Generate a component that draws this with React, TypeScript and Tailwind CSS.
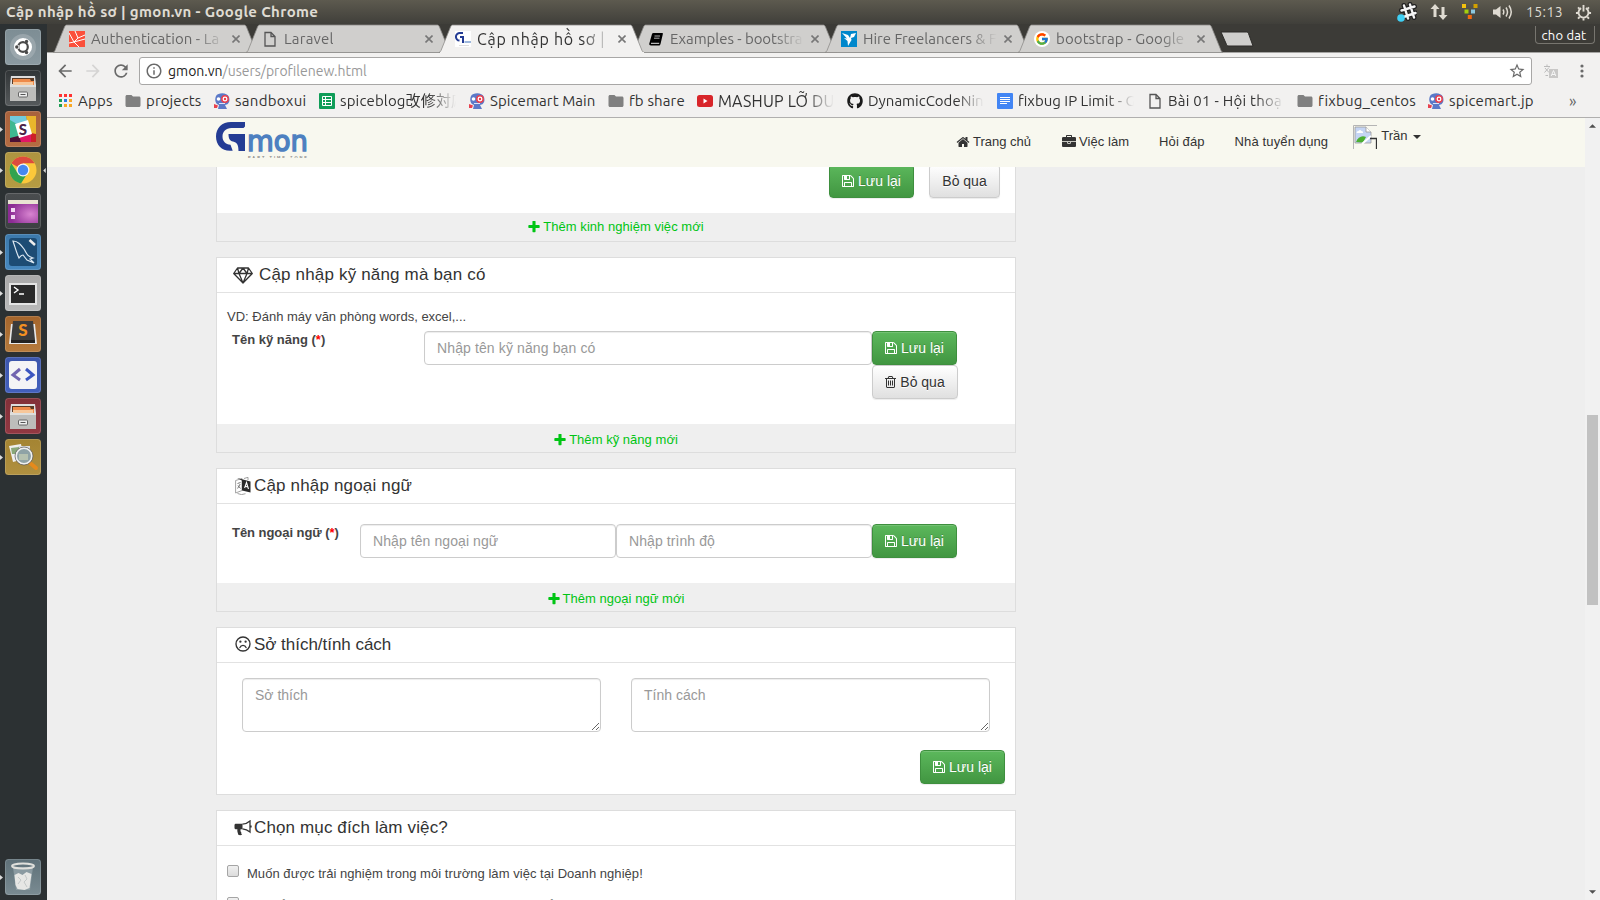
import React from 'react';
import type { ReactNode } from 'react';
import { FaGithub } from 'react-icons/fa';
import { FcGoogle } from 'react-icons/fc';
import { MdOutlineStarBorder, MdRefresh, MdArrowBack, MdArrowForward, MdFolder, MdOutlineInfo } from 'react-icons/md';

const UI = "font-['Ubuntu','Noto_Sans','Noto_Sans_CJK_JP',sans-serif]";

/* ---------- glyph icons ---------- */

function Glyph({ d, className, box = '0 0 1792 1792' }: { d: string; className: string; box?: string }) {
  return (
    <svg viewBox={box} className={className} fill="currentColor">
      <path d={d} />
    </svg>
  );
}

const PLUS =
  'M1600 736v192q0 40-28 68t-68 28h-416v416q0 40-28 68t-68 28h-192q-40 0-68-28t-28-68v-416h-416q-40 0-68-28t-28-68v-192q0-40 28-68t68-28h416v-416q0-40 28-68t68-28h192q40 0 68 28t28 68v416h416q40 0 68 28t28 68z';
const HOME =
  'M1472 992v480q0 26-19 45t-45 19h-384v-384h-256v384h-384q-26 0-45-19t-19-45v-480q0-1 .5-3t.5-3l575-474 575 474q1 2 1 6zm223-69l-62 74q-8 9-21 11h-3q-13 0-21-7l-692-577-692 577q-12 8-24 7-13-2-21-11l-62-74q-8-10-7-23.5t11-21.5l719-599q32-26 76-26t76 26l244 204v-195q0-14 9-23t23-9h192q14 0 23 9t9 23v408l219 182q10 8 11 21.500t-7 23.500z';
const SAVE =
  'M512 1536h768v-384h-768v384zm896 0h128v-896q0-14-10-38.500t-20-34.500l-281-281q-10-10-34-20t-39-10v416q0 40-28 68t-68 28h-576q-40 0-68-28t-28-68v-416h-128v1280h128v-416q0-40 28-68t68-28h832q40 0 68 28t28 68v416zm-384-928v-320q0-13-9.500-22.500t-22.500-9.500h-192q-13 0-22.500 9.500t-9.500 22.500v320q0 13 9.500 22.500t22.500 9.500h192q13 0 22.500-9.500t9.500-22.500zm640 32v928q0 40-28 68t-68 28h-1344q-40 0-68-28t-28-68v-1344q0-40 28-68t68-28h928q40 0 88 20t76 48l280 280q28 28 48 76t20 88z';
const TRASH =
  'M704 736v576q0 14-9 23t-23 9h-64q-14 0-23-9t-9-23v-576q0-14 9-23t23-9h64q14 0 23 9t9 23zm256 0v576q0 14-9 23t-23 9h-64q-14 0-23-9t-9-23v-576q0-14 9-23t23-9h64q14 0 23 9t9 23zm256 0v576q0 14-9 23t-23 9h-64q-14 0-23-9t-9-23v-576q0-14 9-23t23-9h64q14 0 23 9t9 23zm128 724v-948h-896v948q0 22 7 40.500t14.500 27 10.500 8.500h832q3 0 10.500-8.500t14.500-27 7-40.500zm-672-1076h448l-48-117q-7-9-17-11h-317q-10 2-17 11zm928 32v64q0 14-9 23t-23 9h-96v948q0 83-47 143.500t-113 60.500h-832q-66 0-113-58.500t-47-141.500v-952h-96q-14 0-23-9t-9-23v-64q0-14 9-23t23-9h309l70-167q15-37 54-63t79-26h320q40 0 79 26t54 63l70 167h309q14 0 23 9t9 23z';
const BRIEFCASE =
  'M640 256h512v-128h-512v128zm1152 640v480q0 66-47 113t-113 47h-1472q-66 0-113-47t-47-113v-480h672v160q0 26 19 45t45 19h320q26 0 45-19t19-45v-160h672zm-768 0v128h-256v-128h256zm768-480v384h-1792v-384q0-66 47-113t113-47h352v-160q0-40 28-68t68-28h576q40 0 68 28t28 68v160h352q66 0 113 47t47 113z';

function Diamond() {
  return (
    <svg viewBox="0 0 20 17" className="h-[17px] w-5" fill="none" stroke="#333" strokeWidth="1.3" strokeLinejoin="round">
      <path d="M4.500 1h11L19.300 6.500 10 16 .7 6.500zM.7 6.500h18.600M6 6.500L10 16l4-9.500M4.500 1L6 6.500 10 1l4 5.500L15.500 1" />
    </svg>
  );
}
function Language() {
  return (
    <svg viewBox="0 0 16 18" className="h-[18px] w-4" fill="none">
      <path d="M.6 3.500L7 1.500v12L.6 16z" stroke="#999" strokeWidth=".9" />
      <path d="M2.500 6.500l3-1M3 8.500l2.500 3M5.200 7L2.600 11.500" stroke="#666" strokeWidth=".9" />
      <path d="M2.500 16.500l4 1.100 4-.9M9 1.500l4-1.200V3" stroke="#888" strokeWidth=".8" />
      <path d="M2 1l6 1.500 7.500 2v11L7 13.500V3.500z" fill="#2b2b2b" />
      <path d="M9.600 11L11.500 5.500l2 6.500M10.200 9.300l2.600.7" stroke="#fff" strokeWidth="1.100" />
    </svg>
  );
}
function Frown() {
  return (
    <svg viewBox="0 0 16 16" className="-mt-[2px] h-4 w-4" fill="none" stroke="#333" strokeWidth="1.350">
      <circle cx="8" cy="8" r="7" />
      <path d="M4.900 11.600c.5-1.500 1.600-2.300 3.100-2.300s2.600.8 3.100 2.300" strokeLinecap="round" />
      <circle cx="5.400" cy="5.700" r="1.150" fill="#333" stroke="none" />
      <circle cx="10.600" cy="5.700" r="1.150" fill="#333" stroke="none" />
    </svg>
  );
}
function Bullhorn() {
  return (
    <svg viewBox="0 0 18 16" className="h-4 w-[18px]">
      <path d="M2 3.700h6.500v5.600H6.600c-.4 1.500.1 2.500.8 3.400-.4.700.1 1.300.8 1.800-1 1-3.300.8-3.900.2C3.800 13 3 11.200 3.400 9.300H2C1 9.300.5 8.600.5 8V5c0-.7.500-1.300 1.500-1.300z" fill="#333" />
      <path d="M8.500 4.200C11.300 3.900 13.800 2.800 16 .9v11.200c-2.200-1.900-4.700-3-7.500-3.300M17 5.500v2" fill="none" stroke="#333" strokeWidth="1.300" />
    </svg>
  );
}

/* ---------- favicons ---------- */

function Gmon({ className }: { className: string }) {
  return (
    <svg viewBox="0 0 92 36" className={className}>
      <path d="M29 0v4.500L27.500 6H15.500C9.800 6 6.500 10 6.500 14.500c0 4.700 3 7.800 8 8.300l2.200 6H14C5.500 28.800 0 23 0 14.500S6 0 15 0z" fill="#243c94" />
      <path d="M12.500 12H29v17h-6.500c0-6-1.500-8.600-5.500-9.500-3.200-.7-4.500-2.900-4.500-7.500z" fill="#243c94" />
      <text x="31" y="28.800" textLength="61" lengthAdjust="spacingAndGlyphs" fontFamily="DejaVu Sans" fontWeight="400" fontSize="29" fill="#4d80c0" stroke="#4d80c0" strokeWidth="1.500">
        mon
      </text>
      <text x="32" y="37" textLength="59" fontFamily="Liberation Sans" fontWeight="700" fontSize="4" fill="#888">
        PART TIME ZONE
      </text>
    </svg>
  );
}
function GmonTiny() {
  return (
    <svg viewBox="0 0 16 16" className="size-4">
      <path d="M0 0h16v16H0z" fill="#fff" />
      <path d="M8 2H5a3.800 3.800 0 00-.5 7.600M5 6h3v6" fill="none" stroke="#243c94" strokeWidth="2" />
      <path d="M9.500 11H16" stroke="#7ea0d0" strokeWidth="1.500" />
      <path d="M4 14.500h10" stroke="#ddd" />
    </svg>
  );
}
function LaravelIcon() {
  return (
    <svg viewBox="0 0 16 16" className="size-4">
      <path d="M0 0h16v16H0z" fill="#fb503b" />
      <path d="M0 2l5 9 11-3M6 0l3 7 7-3M9 7l-4 4 5 5M0 12l5-1" fill="none" stroke="#fff" strokeWidth="1" />
    </svg>
  );
}
function PageIcon() {
  return (
    <svg viewBox="0 0 16 16" className="size-4" fill="none" stroke="#555" strokeWidth="1.300">
      <path d="M3 1.500h6l4 4v9.500H3zM9 1.500v4h4" />
    </svg>
  );
}
function BookIcon() {
  return (
    <svg viewBox="0 0 16 16" className="size-4">
      <path d="M5.500 2h8.500c.8 0 1 .5.800 1.200L12.500 13c-.2.900-.7 1.500-1.500 1.500H3c-1.300 0-2-.9-1.700-2L4 3c.2-.7.700-1 1.500-1z" fill="#000" />
      <path d="M6.500 5h5.500M6 7.200h5.500" stroke="#ddd" strokeWidth=".8" />
      <path d="M3 12.300h8.200" stroke="#fff" strokeWidth=".9" />
    </svg>
  );
}
function BirdIcon() {
  return (
    <svg viewBox="0 0 16 16" className="size-4">
      <path d="M0 0h16v16H0z" fill="#0087cb" />
      <path d="M1 2l6 2 2 3 1-4 5-1-2 4-3 1 .5 2L7 15l-.5-5L3 7l3 .5z" fill="#fff" />
    </svg>
  );
}
function GoogleIcon() {
  return (
    <span className="flex size-4 shrink-0 items-center justify-center rounded-full bg-white">
      <FcGoogle className="size-[14px]" />
    </span>
  );
}
function SpiceIcon() {
  return (
    <svg viewBox="0 0 16 16" className="size-4">
      <path d="M2 3C4-.5 13-1 15 4c1.500 5-1 8-4 8l2 4H4l1-4C1 11 .5 6 2 3z" fill="#5b79c8" />
      <path d="M0 11l4 1.500L3 15H0z" fill="#e8414f" />
      <circle cx="4.500" cy="6" r="1.800" fill="#fff" />
      <circle cx="11" cy="6" r="3.200" fill="#fff" stroke="#e8414f" strokeWidth="1.500" />
      <circle cx="11" cy="6" r="1.200" fill="#e8414f" />
      <path d="M5 10.500h6" stroke="#d9e2f7" />
    </svg>
  );
}
function AppsIcon() {
  const colors = ['#f33', '#f33', '#f33', '#1e9e54', '#2a7de1', '#f9a825', '#1e9e54', '#f9a825', '#f9a825'];
  return (
    <span className="grid grid-cols-3 gap-[2px]">
      {colors.map((c, i) => (
        <svg key={i} viewBox="0 0 3 3" className="size-[3px]"><path d="M0 0h3v3H0z" fill={c} /></svg>
      ))}
    </span>
  );
}
function SheetIcon() {
  return (
    <svg viewBox="0 0 16 16" className="size-4">
      <rect width="16" height="16" rx="1" fill="#0f9d58" />
      <path d="M3.500 3.500h9v9h-9zM3.500 6.500h9M3.500 9.500h9M6.500 3.500v9" stroke="#fff" fill="none" />
    </svg>
  );
}
function DocIcon() {
  return (
    <svg viewBox="0 0 16 16" className="size-4">
      <rect width="16" height="16" rx="1" fill="#4285f4" />
      <path d="M3 4.500h10M3 6.500h10M3 8.500h10M3 10.500h7" stroke="#fff" />
    </svg>
  );
}
function TubeIcon() {
  return (
    <svg viewBox="0 0 16 16" className="size-4">
      <rect y="2" width="16" height="12" rx="2.500" fill="#d8252a" />
      <path d="M6.500 5.500v5l4-2.500z" fill="#fff" />
    </svg>
  );
}
const Folder = () => <MdFolder className="size-[18px] shrink-0 text-[#808080]" />;

/* ---------- launcher ---------- */

function Cabinet() {
  return (
    <>
      <path d="M6 6h24l1 9H5z" fill="#ddd" />
      <path d="M7 8h22v6H7z" fill="#5b3a24" />
      <path d="M8 9h17l1 2h3v4H8z" fill="#ee8a4a" />
      <path d="M8 12h20v3H8z" fill="#f7c79a" />
      <path d="M5 15h26v16H5z" fill="#bdbdbb" />
      <path d="M5 15h26v2H5z" fill="#dededc" />
      <rect x="13.500" y="22" width="9" height="5" rx="1" fill="#eee" stroke="#666" />
      <path d="M15.500 24.500h5" stroke="#555" />
    </>
  );
}

const launcher: { from: string; to: string; running?: boolean; focused?: boolean; art: ReactNode }[] = [
  {
    from: '#7d8d94', to: '#8b9aa1',
    art: (
      <>
        <circle cx="18" cy="18" r="13" fill="#a8b3b8" opacity=".6" />
        <circle cx="18" cy="18" r="9" fill="#fff" />
        <circle cx="18" cy="18" r="4.800" fill="none" stroke="#4a4a4a" strokeWidth="2.200" />
        <path d="M11 18h3M20.500 13l1.700-2.500M20.500 23l1.700 2.500" stroke="#fff" strokeWidth="3.500" />
        <circle cx="11.800" cy="18" r="1.700" fill="#4a4a4a" />
        <circle cx="21.500" cy="12.500" r="1.700" fill="#4a4a4a" />
        <circle cx="21.500" cy="23.500" r="1.700" fill="#4a4a4a" />
      </>
    ),
  },
  { from: '#303436', to: '#565a5c', art: <Cabinet /> },
  {
    from: '#a8623c', to: '#b56c42', running: true,
    art: (
      <>
        <path d="M5 5h16l2 8-11 4-7 7z" fill="#70cadb" />
        <path d="M21 5h10v21l-5-1-3-12z" fill="#e9b52c" />
        <path d="M5 9l7 4 4 12-11 3z" fill="#3eb890" />
        <path d="M5 27l12-3 8-2 2 9H5z" fill="#4b1035" />
        <path d="M14 25l12-3 3 9H16z" fill="#e01765" />
        <path d="M26 22l5 1v8h-5z" fill="#cc2027" />
        <path d="M10 13l13-4 4 14-13 4z" fill="#fff" />
        <text x="18" y="23.500" textAnchor="middle" fontFamily="Lato" fontWeight="900" fontSize="15" fill="#4b2348">S</text>
      </>
    ),
  },
  {
    from: '#ae9440', to: '#b59b42', running: true, focused: true,
    art: (
      <>
        <circle cx="18" cy="18" r="13.500" fill="#fbc83a" />
        <path d="M18 18L6.300 11.300A13.500 13.500 0 0129.700 11.300H18z" fill="#dd4b3e" />
        <path d="M6.300 11.300A13.500 13.500 0 0016 31.400L22 22 12 20z" fill="#31a350" />
        <circle cx="18" cy="18" r="6.500" fill="#f4f4f4" />
        <circle cx="18" cy="18" r="5.200" fill="#4688f1" />
      </>
    ),
  },
  {
    from: '#4a4d4f', to: '#3c4042',
    art: (
      <>
        <defs>
          <radialGradient id="desk" cx=".75" cy=".6" r=".7">
            <stop offset="0" stopColor="#d884d0" />
            <stop offset="1" stopColor="#8c2c94" />
          </radialGradient>
        </defs>
        <path d="M3 8h30v22H3z" fill="url(#desk)" />
        <path d="M3 7h30v4H3z" fill="#e9e4d2" />
        <path d="M6 15h4v4H6zM6 22h4v4H6z" fill="#f2d8f2" />
      </>
    ),
  },
  {
    from: '#3c79ab', to: '#4687bd', running: true,
    art: (
      <>
        <rect x="4" y="4" width="28" height="28" rx="3" fill="#1d4c74" />
        <path d="M8 7c5 0 8 4 11 8 3 5 3 7 9 9l-3 1 4 4-7-3-4-5c-2 0-3 2-4 3-2-4-4-11-6-17z" fill="none" stroke="#dce8f2" strokeWidth="1.200" />
        <path d="M24.500 6l5.500 5" stroke="#eee" strokeWidth="2.500" />
      </>
    ),
  },
  {
    from: '#a9a9a9', to: '#b9b9b9', running: true,
    art: (
      <>
        <path d="M4 8h28v22H4z" fill="#e4e4e4" />
        <path d="M6 10h24v18H6z" fill="#2a2a2a" />
        <path d="M9 12l4 3-4 3M14 19h5" fill="none" stroke="#fff" strokeWidth="1.400" />
      </>
    ),
  },
  {
    from: '#a4652c', to: '#b57a3c', running: true,
    art: (
      <>
        <path d="M6 8l-2 20h28L30 8z" fill="#e8e8e8" />
        <path d="M8 5h20l2 19H6z" fill="#3c3c3c" />
        <path d="M6 24h24v3H6z" fill="#222" />
        <text x="18" y="20" textAnchor="middle" fontFamily="Lato" fontWeight="900" fontSize="17" fill="#f29022">S</text>
      </>
    ),
  },
  {
    from: '#3c56ac', to: '#4360bd', running: true,
    art: (
      <>
        <rect x="4" y="4" width="28" height="28" rx="3" fill="#f4f4f6" />
        <path d="M15 12l-7 6 7 5" fill="none" stroke="#7264b0" strokeWidth="3" />
        <path d="M21 12l7 6-7 5" fill="none" stroke="#3c56c0" strokeWidth="3" />
      </>
    ),
  },
  { from: '#823038', to: '#923842', running: true, art: <Cabinet /> },
  {
    from: '#a48432', to: '#b09040', running: true,
    art: (
      <>
        <path d="M4 7l12-2 3 15-11 3z" fill="#eee" />
        <path d="M13 7h12v14H13z" fill="#ddd" />
        <path d="M6 9l8-1v7H7z" fill="#8aa87a" />
        <path d="M25 24l6 5" stroke="#e58a1c" strokeWidth="4" strokeLinecap="round" />
        <circle cx="19" cy="17" r="8" fill="#8fa3a6" stroke="#f0f0f0" strokeWidth="2" />
        <circle cx="19" cy="17" r="9" fill="none" stroke="#555" strokeWidth=".7" />
        <path d="M14 15h9v6h-9z" fill="#b6c2b0" />
      </>
    ),
  },
];

function LauncherTile({ item }: { item: (typeof launcher)[number] }) {
  const id = 'g' + item.from.slice(1) + item.to.slice(1);
  return (
    <div className="flex h-9 items-center">
      <svg viewBox="0 0 5 8" className={item.running ? 'h-[5px] w-[3px]' : 'invisible h-[5px] w-[3px]'}><path d="M0 0l5 4-5 4z" fill="#ddd" /></svg>
      <svg viewBox="0 0 36 36" className="ml-[2px] size-9">
        <defs>
          <linearGradient id={id} x1="0" y1="0" x2="0" y2="1">
            <stop offset="0" stopColor={item.from} />
            <stop offset="1" stopColor={item.to} />
          </linearGradient>
        </defs>
        <rect width="36" height="36" rx="3.500" fill={'url(#' + id + ')'} />
        <rect x=".5" y=".5" width="35" height="35" rx="3" fill="none" stroke="#fff" opacity=".15" />
        {item.art}
      </svg>
      {item.focused && (
        <svg viewBox="0 0 4 8" className="ml-[2px] h-[5px] w-[3px]"><path d="M4 0L0 4l4 4z" fill="#ddd" /></svg>
      )}
    </div>
  );
}

const trash: (typeof launcher)[number] = {
  from: '#5e7078', to: '#7a8b92', running: true,
  art: (
    <>
      <path d="M8 8h20l-3 23H11z" fill="#93a3a9" opacity=".8" />
      <ellipse cx="18" cy="7" rx="11" ry="2.500" fill="none" stroke="#e0e0dc" strokeWidth="2" />
      <path d="M9.500 16l4-2 4 2 4-3 5 2-2 14-5 2-7-1-2-4z" fill="#e6e6e4" />
      <path d="M13 18l3 3-3 4M20 16l2 4-3 3 3 5" fill="none" stroke="#c4c8c8" />
    </>
  ),
};

/* ---------- browser chrome ---------- */

function TopBar() {
  return (
    <div className={`${UI} flex h-6 items-center bg-gradient-to-b from-[#5d5a4f] to-[#403f3a] px-[6px] text-[#dfdbd2]`}>
      <span className="text-[15px] font-bold tracking-[0.35px] whitespace-nowrap">Cập nhập hồ sơ | gmon.vn - Google Chrome</span>
      <div className="ml-auto flex items-center">
        <svg viewBox="0 0 20 20" className="size-5" fill="none">
          <path d="M7 3.500l4 13M13 2.500l4 13M4.500 8.500l13-4M6.500 15l12-4" stroke="#222" strokeWidth="5" strokeLinecap="round" />
          <path d="M7 3.500l4 13M13 2.500l4 13M4.500 8.500l13-4M6.500 15l12-4" stroke="#f4f4f4" strokeWidth="2.400" strokeLinecap="round" />
          <circle cx="4" cy="16" r="3.800" fill="#3fd0f5" />
        </svg>
        <svg viewBox="0 0 18 18" className="ml-[13px] size-[18px]" fill="#dfdbd2">
          <path d="M5 1l4.500 5H6.500v8h-3V6H.5zM13 17l-4.500-5h3V4h3v8h3z" />
        </svg>
        <svg viewBox="0 0 16 16" className="ml-[14px] size-4">
          <path d="M0 0h4v4H0z" fill="#f3c20f" /><path d="M11.500 0h4v4h-4z" fill="#d2a000" />
          <path d="M2.500 5.500h4v4h-4z" fill="#a4cf0c" /><path d="M9 5.500h4v4H9z" fill="#8cc8e0" />
          <path d="M5.800 11h4v4h-4z" fill="#f36a10" />
        </svg>
        <svg viewBox="0 0 20 16" className="ml-[15px] h-4 w-5" fill="none" stroke="#dfdbd2" strokeWidth="1.500">
          <path d="M0 5.500h3L7.500 2v12L3 10.500H0z" fill="#dfdbd2" stroke="none" />
          <path d="M10 5.500q1.600 2.500 0 5M13 3.500q3 4.500 0 9M16 1.500q4.500 6.500 0 13" />
        </svg>
        <span className="ml-[13px] text-[14px] tracking-[0.4px]">15:13</span>
        <svg viewBox="0 0 18 18" className="mr-[2px] ml-[12px] size-[17px]" fill="none" stroke="#dfdbd2">
          <path d="M6.500 4.400a5.300 5.300 0 105 0" strokeWidth="2" />
          <path d="M9 1v7" strokeWidth="2" />
          <path d="M1 9.500h2.500M14.500 9.500H17M3.200 3.500l1.700 1.700M14.800 3.500l-1.700 1.700M3.200 15.500l1.700-1.700M14.800 15.500l-1.700-1.700M9 15v2.500" strokeWidth="2" />
        </svg>
      </div>
    </div>
  );
}

const tabs: { title: string; icon: ReactNode; active?: boolean; track: string }[] = [
  { title: 'Authentication - La', icon: <LaravelIcon />, track: 'text-[15px] tracking-[0.05px]' },
  { title: 'Laravel', icon: <PageIcon />, track: 'text-[15px] tracking-[0.2px]' },
  { title: 'Cập nhập hồ sơ |', icon: <GmonTiny />, active: true, track: 'text-[16px] tracking-[0.7px]' },
  { title: 'Examples - bootstra', icon: <BookIcon />, track: 'text-[15px] tracking-[-0.05px]' },
  { title: 'Hire Freelancers & F', icon: <BirdIcon />, track: 'text-[15px]' },
  { title: 'bootstrap - Google', icon: <GoogleIcon />, track: 'text-[15px] tracking-[0.1px]' },
];

function TabStrip() {
  return (
    <div className={`${UI} relative flex h-[29px] bg-[#3c3b37] pl-[6px]`}>
      <span className="absolute bottom-0 left-0 h-px w-full bg-[#a5a4a2]" />
      {tabs.map((t) => (
        <div key={t.title} className={t.active ? 'relative z-10 h-full w-[193px]' : 'relative h-full w-[193px]'}>
          <svg viewBox="0 0 206 29" className="absolute top-0 left-0 h-[29px] w-[206px]">
            <path d="M0 28.500c1-.3 1.500-1 2-2L11.500 3c.8-1.600 1.200-2 2.500-2h177c1.300 0 1.700.5 2.500 2l9.500 23.500c.5 1 1 1.700 2 2z" fill={t.active ? '#f2f1f0' : '#d0cfcd'} stroke="#8d8c89" strokeWidth=".8" />
            {t.active && <path d="M1 29v-1h204v1z" fill="#f2f1f0" />}
          </svg>
          <div className="relative flex h-full items-center pt-px pl-4">
            {t.icon}
            <span
              className={
                'ml-[6px] w-[134px] shrink-0 overflow-hidden whitespace-nowrap [mask-image:linear-gradient(to_right,black_78%,transparent)] ' +
                t.track + (t.active ? ' text-[#333]' : ' text-[#666]')
              }
            >
              {t.title}
            </span>
            <svg viewBox="0 0 8 8" className="ml-[7px] size-2" stroke="#777" strokeWidth="1.600"><path d="M.5.5l7 7M7.500.5l-7 7" /></svg>
          </div>
        </div>
      ))}
      <svg viewBox="0 0 34 17" className="mt-[7px] ml-[9px] h-[17px] w-[34px]">
        <path d="M1 1h25c1 0 2 .3 2.500 1.500L33 15H9c-1.500 0-2-.5-2.500-1.500z" fill="#cfcecc" stroke="#2c2b28" />
      </svg>
      <span className="mt-[2px] mr-[5px] ml-auto h-[18px] w-[60px] rounded-b border border-t-0 border-[#77756f] pr-[2px] text-center text-[13px] leading-[18px] tracking-[0.2px] text-white">cho dat</span>
    </div>
  );
}

function AddressBar() {
  return (
    <div className={`${UI} flex h-[36px] items-center bg-[#f2f1f0] pl-2`}>
      <MdArrowBack className="size-5 text-[#6a6a6a]" />
      <MdArrowForward className="ml-2 size-5 text-[#d5d4d3]" />
      <MdRefresh className="ml-2 size-5 text-[#6a6a6a]" />
      <div className="ml-2 flex h-[28px] w-[1393px] items-center rounded-[3px] border border-[#a8a7a6] bg-white pr-[5px] pl-[5px] text-[14px]">
        <MdOutlineInfo className="size-[18px] text-[#6a6a6a]" />
        <span className="ml-[5px] tracking-[0px] text-[#222]">gmon.vn<span className="text-[#999]">/users/profilenew.html</span></span>
        <MdOutlineStarBorder className="ml-auto size-[18px] text-[#6a6a6a]" />
      </div>
      <svg viewBox="0 0 14 14" className="ml-[12px] size-[14px]" fill="none" stroke="#bbb">
        <path d="M0 2.500h6M3 .5v2M1 4l4 4.500M5 3.500L.5 8.500M1.500 11.500H4" />
        <path d="M5 5h9v9H5z" fill="#c9c8c7" stroke="none" />
        <path d="M7.200 12l2.300-5.500 2.300 5.500M8 10.500h3" stroke="#f6f6f6" />
      </svg>
      <svg viewBox="0 0 4 14" className="ml-[22px] h-[14px] w-1" fill="#6a6a6a"><circle cx="2" cy="2" r="1.600" /><circle cx="2" cy="7" r="1.600" /><circle cx="2" cy="12" r="1.600" /></svg>
    </div>
  );
}

const bookmarks: { label: string; icon: ReactNode; w: string; fade?: boolean; text?: string }[] = [
  { label: 'Apps', icon: <AppsIcon />, w: 'w-[68px]', text: 'tracking-[0.2px]' },
  { label: 'projects', icon: <Folder />, w: 'w-[89px]', text: 'tracking-[0.1px]' },
  { label: 'sandboxui', icon: <SpiceIcon />, w: 'w-[105px]', text: 'tracking-[0.3px]' },
  { label: 'spiceblog改修対応', icon: <SheetIcon />, w: 'w-[150px]', fade: true, text: 'tracking-[0.15px]' },
  { label: 'Spicemart Main', icon: <SpiceIcon />, w: 'w-[139px]', text: 'tracking-[0.1px]' },
  { label: 'fb share', icon: <Folder />, w: 'w-[89px]', text: 'tracking-[0.15px]' },
  { label: 'MASHUP LỠ DU', icon: <TubeIcon />, w: 'w-[150px]', fade: true, text: 'text-[16px] tracking-[0.2px]' },
  { label: 'DynamicCodeNin', icon: <FaGithub className="size-4 text-[#1a1a1a]" />, w: 'w-[150px]', fade: true },
  { label: 'fixbug IP Limit - G', icon: <DocIcon />, w: 'w-[150px]', fade: true },
  { label: 'Bài 01 - Hội thoạ', icon: <PageIcon />, w: 'w-[150px]', fade: true, text: 'tracking-[0.25px]' },
  { label: 'fixbug_centos', icon: <Folder />, w: 'w-[131px]', text: 'tracking-[0.17px]' },
  { label: 'spicemart.jp', icon: <SpiceIcon />, w: 'w-[140px]', text: 'tracking-[0.17px]' },
];

function Bookmarks() {
  return (
    <div className={`${UI} flex h-[29px] items-center border-b border-[#b0afae] bg-[#f2f1f0] pb-[5px] pl-[10px] text-[15px] text-[#333]`}>
      {bookmarks.map((b) => (
        <div key={b.label} className={'flex shrink-0 items-center ' + b.w}>
          <span className="flex w-4 shrink-0 items-center justify-center">{b.icon}</span>
          <span
            className={
              'ml-[5px] overflow-hidden leading-5 whitespace-nowrap ' + (b.text ?? '') +
              (b.fade ? ' w-[116px] [mask-image:linear-gradient(to_right,black_76%,transparent)]' : '')
            }
          >
            {b.label}
          </span>
        </div>
      ))}
      <span className="ml-px text-[16px] text-[#666]">»</span>
    </div>
  );
}

/* ---------- page ---------- */

function SiteNav() {
  return (
    <header className="flex h-[49px] shrink-0 bg-[#f8f8ef] text-[13px] text-[#333]">
      <div className="ml-[169px] pt-1"><Gmon className="h-[36px] w-[92px]" /></div>
      <nav className="ml-[648px] flex pt-[14px] leading-[20px]">
        <a className="flex"><Glyph d={HOME} className="mt-[3px] mr-[3px] size-[14px]" />Trang chủ</a>
        <a className="ml-[31px] flex"><Glyph d={BRIEFCASE} className="mt-[3px] mr-[3px] size-[14px]" /><span className="tracking-[0.05px]">Việc làm</span></a>
        <a className="ml-[30px] tracking-[0.1px]">Hỏi đáp</a>
        <a className="ml-[30px] tracking-[0.13px]">Nhà tuyển dụng</a>
      </nav>
      <div className="ml-[25px] flex pt-[7px]">
        <svg viewBox="0 0 24 24" className="size-6">
          <path d="M.5 24V.5H24" fill="none" stroke="#b5b5b5" />
          <path d="M2 2h11l5 5v11H2z" fill="#c5d5f4" stroke="#9a9a9a" strokeWidth=".8" />
          <path d="M13 2v5h5" fill="#fff" stroke="#9a9a9a" strokeWidth=".8" />
          <path d="M3 17c2-5 6-7 10-5l-3 5.500z" fill="#4caf32" />
          <path d="M3.500 8q0-2 2-2 1.500-2 3 0 2 0 1.500 2z" fill="#fff" />
          <path d="M9 19l9-8" stroke="#fff" strokeWidth="2" />
          <path d="M17 13.500h6.500V24" fill="none" stroke="#333" strokeWidth="1.300" />
        </svg>
        <span className="ml-[4px] leading-[21px]">Trần</span>
        <svg viewBox="0 0 8 4" className="mt-[10px] ml-[6px] h-1 w-2"><path d="M0 0h8L4 4z" fill="#333" /></svg>
      </div>
    </header>
  );
}

function SaveButton({ className = '' }: { className?: string }) {
  return (
    <button className={'flex h-[34px] w-[85px] shrink-0 items-center justify-center rounded-[4px] border border-[#3e8f3e] bg-gradient-to-b from-[#5cb85c] to-[#419641] text-[14px] text-white shadow-[inset_0_1px_0_rgba(255,255,255,.15),0_1px_1px_rgba(0,0,0,.075)] [text-shadow:0_-1px_0_rgba(0,0,0,.2)] ' + className}>
      <Glyph d={SAVE} className="mr-1 h-[14px] w-3" box="128 0 1536 1792" />
      Lưu lại
    </button>
  );
}

function SkipButton({ icon, className }: { icon?: boolean; className: string }) {
  return (
    <button className={'flex h-[34px] shrink-0 items-center justify-center rounded-[4px] border border-[#ccc] bg-gradient-to-b from-white to-[#e0e0e0] text-[14px] text-[#333] shadow-[inset_0_1px_0_rgba(255,255,255,.15),0_1px_1px_rgba(0,0,0,.075)] [text-shadow:0_1px_0_#fff] ' + className}>
      {icon && <Glyph d={TRASH} className="mr-1 h-[14px] w-[11px]" box="192 0 1408 1792" />}
      Bỏ qua
    </button>
  );
}

const FIELD = 'rounded-[4px] border border-[#ccc] bg-white px-3 text-[14px] text-[#555] shadow-[inset_0_1px_1px_rgba(0,0,0,.075)] placeholder:text-[#999]';

function AddRow({ children, className = '' }: { children: ReactNode; className?: string }) {
  return (
    <div className={'flex h-7 items-center justify-center bg-[#efefef] text-[13px] tracking-[0.03px] text-[#00c514] ' + className}>
      <Glyph d={PLUS} className="mr-[3px] size-[12px]" box="150 150 1492 1492" />
      {children}
    </div>
  );
}

function Card({ icon, title, children, track = 'tracking-[0.17px]' }: { icon: ReactNode; title: string; children: ReactNode; track?: string }) {
  return (
    <section className="mb-[15px] shrink-0 border border-[#ddd] bg-white">
      <h2 className="flex h-[35px] items-center border-b border-[#e2e2e2] text-[17px] text-[#333]">
        {icon}
        <span className={'-mt-[1px] ' + track}>{title}</span>
      </h2>
      {children}
    </section>
  );
}

function Label({ children, className }: { children: ReactNode; className: string }) {
  return (
    <label className={'text-[13px] leading-[18px] font-bold text-[#444] ' + className}>
      {children} (<span className="text-[#f00]">*</span>)
    </label>
  );
}

function Purpose({ children }: { children: ReactNode }) {
  return (
    <label className="flex h-8 pl-[10px]">
      <span className="size-3 rounded-[2px] border border-[#a5a5a5] bg-gradient-to-b from-[#f0f0f0] to-[#dcdcdc]" />
      <span className="mt-[1px] ml-2 text-[13px] leading-[15px] tracking-[0.045px] text-[#444]">{children}</span>
    </label>
  );
}

function Profile() {
  return (
    <main className="ml-[169px] flex h-[733px] w-[800px] flex-col overflow-hidden">
      <section className="mb-[15px] shrink-0 border border-t-0 border-[#ddd] bg-white">
        <div className="flex h-[46px] justify-end pr-[15px]">
          <SaveButton className="-mt-[3px]" />
          <SkipButton className="-mt-[3px] ml-[15px] w-[71px]" />
        </div>
        <AddRow>Thêm kinh nghiệm việc mới</AddRow>
      </section>

      <Card icon={<span className="mr-[6px] ml-4"><Diamond /></span>} title="Cập nhập kỹ năng mà bạn có">
        <div className="h-[131px] pt-[14px]">
          <p className="h-[24px] pl-[10px] text-[13px] leading-[20px] text-[#444]">VD: Đánh máy văn phòng words, excel,...</p>
          <div className="flex items-start">
            <Label className="ml-[15px] w-[192px]">Tên kỹ năng</Label>
            <input className={FIELD + ' h-[34px] w-[448px] tracking-[0.12px]'} placeholder="Nhập tên kỹ năng bạn có" />
            <div>
              <SaveButton />
              <SkipButton icon className="w-[86px]" />
            </div>
          </div>
        </div>
        <AddRow className="pt-[3px]">Thêm kỹ năng mới</AddRow>
      </Card>

      <Card icon={<span className="mr-[3px] ml-[18px]"><Language /></span>} title="Cập nhập ngoại ngữ">
        <div className="flex h-[79px] items-start pt-5">
          <Label className="ml-[15px] w-[128px] tracking-[-0.05px]">Tên ngoại ngữ</Label>
          <input className={FIELD + ' h-[34px] w-[256px] tracking-[0.08px]'} placeholder="Nhập tên ngoại ngữ" />
          <input className={FIELD + ' h-[34px] w-[256px] tracking-[0.08px]'} placeholder="Nhập trình độ" />
          <SaveButton />
        </div>
        <AddRow className="pt-[3px]">Thêm ngoại ngữ mới</AddRow>
      </Card>

      <Card icon={<span className="mr-[3px] ml-[18px]"><Frown /></span>} title="Sở thích/tính cách" track="tracking-[-0.03px]">
        <div className="flex h-[131px] flex-col pt-[15px]">
          <div className="flex h-[54px] justify-between px-[25px]">
            <textarea className={FIELD + ' h-[54px] w-[359px] py-[6px] leading-5'} placeholder="Sở thích" />
            <textarea className={FIELD + ' h-[54px] w-[359px] py-[6px] leading-5'} placeholder="Tính cách" />
          </div>
          <SaveButton className="mt-[18px] mr-[10px] self-end" />
        </div>
      </Card>

      <Card icon={<span className="mr-[2px] ml-[17px]"><Bullhorn /></span>} title="Chọn mục đích làm việc?" track="tracking-[0.13px]">
        <div className="pt-[19px]">
          <Purpose>Muốn được trải nghiệm trong môi trường làm việc tại Doanh nghiệp!</Purpose>
          <Purpose>Có thể làm việc trong các môi trường năng động, hiểu biết</Purpose>
        </div>
      </Card>
    </main>
  );
}

function ScrollBar() {
  return (
    <div className="flex w-[15px] flex-col items-center bg-[#f1f1f1]">
      <svg viewBox="0 0 8 4" className="mt-[6px] h-1 w-[7px]"><path d="M0 4h8L4 0z" fill="#505050" /></svg>
      <div className="mt-[287px] h-[190px] w-[11px] bg-[#c1c1c1]" />
      <svg viewBox="0 0 8 4" className="mt-auto mb-[6px] h-1 w-[7px]"><path d="M0 0h8L4 4z" fill="#505050" /></svg>
    </div>
  );
}

export default function App() {
  return (
    <div className="flex h-[900px] w-[1600px] flex-col overflow-hidden bg-[#eee] font-['Liberation_Sans',Arial,sans-serif]">
      <TopBar />
      <div className="flex h-[876px]">
        <aside className="flex w-[47px] shrink-0 flex-col gap-[5px] bg-[#2c3133] py-[5px]">
          {launcher.map((item) => (
            <LauncherTile key={item.from} item={item} />
          ))}
          <div className="mt-auto"><LauncherTile item={trash} /></div>
        </aside>
        <div className="flex w-[1553px] flex-col">
          <TabStrip />
          <AddressBar />
          <Bookmarks />
          <div className="flex h-[782px]">
            <div className="flex w-[1538px] flex-col">
              <SiteNav />
              <Profile />
            </div>
            <ScrollBar />
          </div>
        </div>
      </div>
    </div>
  );
}
